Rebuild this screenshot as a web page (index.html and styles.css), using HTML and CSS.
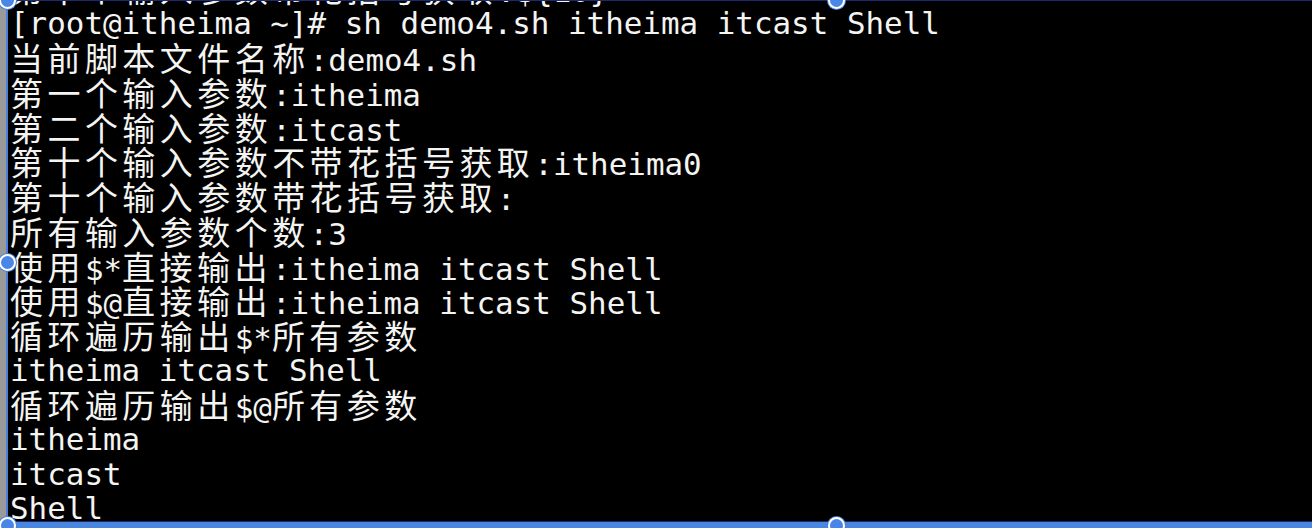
FILE: index.html
```html
<!DOCTYPE html>
<html>
<head>
<meta charset="utf-8">
<link rel="stylesheet" href="styles.css">
</head>
<body>
<div class="page">
  <div class="strip"></div>
  <div class="frame">
    <div class="term">
      <div class="line partial"><span class="c">第十个输入参数带花括号获取</span>:${10}</div>
      <div class="line">[root@itheima ~]# sh demo4.sh itheima itcast Shell</div>
      <div class="line"><span class="c">当前脚本文件名称</span>:demo4.sh</div>
      <div class="line"><span class="c">第一个输入参数</span>:itheima</div>
      <div class="line"><span class="c">第二个输入参数</span>:itcast</div>
      <div class="line"><span class="c">第十个输入参数不带花括号获取</span>:itheima0</div>
      <div class="line"><span class="c">第十个输入参数带花括号获取</span>:</div>
      <div class="line"><span class="c">所有输入参数个数</span>:3</div>
      <div class="line"><span class="c">使用</span>$*<span class="c">直接输出</span>:itheima itcast Shell</div>
      <div class="line"><span class="c">使用</span>$@<span class="c">直接输出</span>:itheima itcast Shell</div>
      <div class="line"><span class="c">循环遍历输出</span>$*<span class="c">所有参数</span></div>
      <div class="line">itheima itcast Shell</div>
      <div class="line"><span class="c">循环遍历输出</span>$@<span class="c">所有参数</span></div>
      <div class="line">itheima</div>
      <div class="line">itcast</div>
      <div class="line">Shell</div>
    </div>
    <span class="handle h-tl"></span>
    <span class="handle h-ml"></span>
    <span class="handle h-bl"></span>
    <span class="handle h-tm"></span>
    <span class="handle h-bm"></span>
  </div>
</div>
</body>
</html>
```

FILE: styles.css
```css
html, body {
  margin: 0;
  padding: 0;
  background: #000;
  overflow: hidden;
}
.page {
  display: flex;
  width: 1312px;
  height: 528px;
}
.strip {
  width: 6px;
  flex: none;
  background: #9a9a9a;
}
.frame {
  position: relative;
  flex: 1;
  border-left: 2px solid #4a80d8;
  border-top: 1px solid #1a2a70;
  border-bottom: 6px solid #4a86e0;
  box-shadow: inset 0 -1px 0 #1a2a70;
  background: #000;
}
.term {
  height: 100%;
  overflow: hidden;
  padding-left: 2px;
  font-family: "DejaVu Sans Mono", "Noto Sans CJK SC", monospace;
  font-size: 30.9px;
  color: #f4f4f2;
}
.line {
  height: 34.7px;
  line-height: 34.7px;
  white-space: pre;
}
.line.partial {
  margin-top: -30px;
}
.c {
  font-family: "Noto Sans CJK SC", sans-serif;
  font-size: 33px;
  letter-spacing: 4.45px;
  line-height: 34.7px;
}
.handle {
  position: absolute;
  width: 13px;
  height: 13px;
  border-radius: 50%;
  background: #4a86e8;
  border: 2px solid #ffffff;
  box-shadow: 0 0 0 1px #4a80d8;
}
.h-tl { left: -9px; top: -9px; }
.h-ml { left: -9px; top: 253px; }
.h-bl { left: -9px; bottom: -12px; }
.h-tm { left: 820px; top: -9px; }
.h-bm { left: 820px; bottom: -12px; }
```
